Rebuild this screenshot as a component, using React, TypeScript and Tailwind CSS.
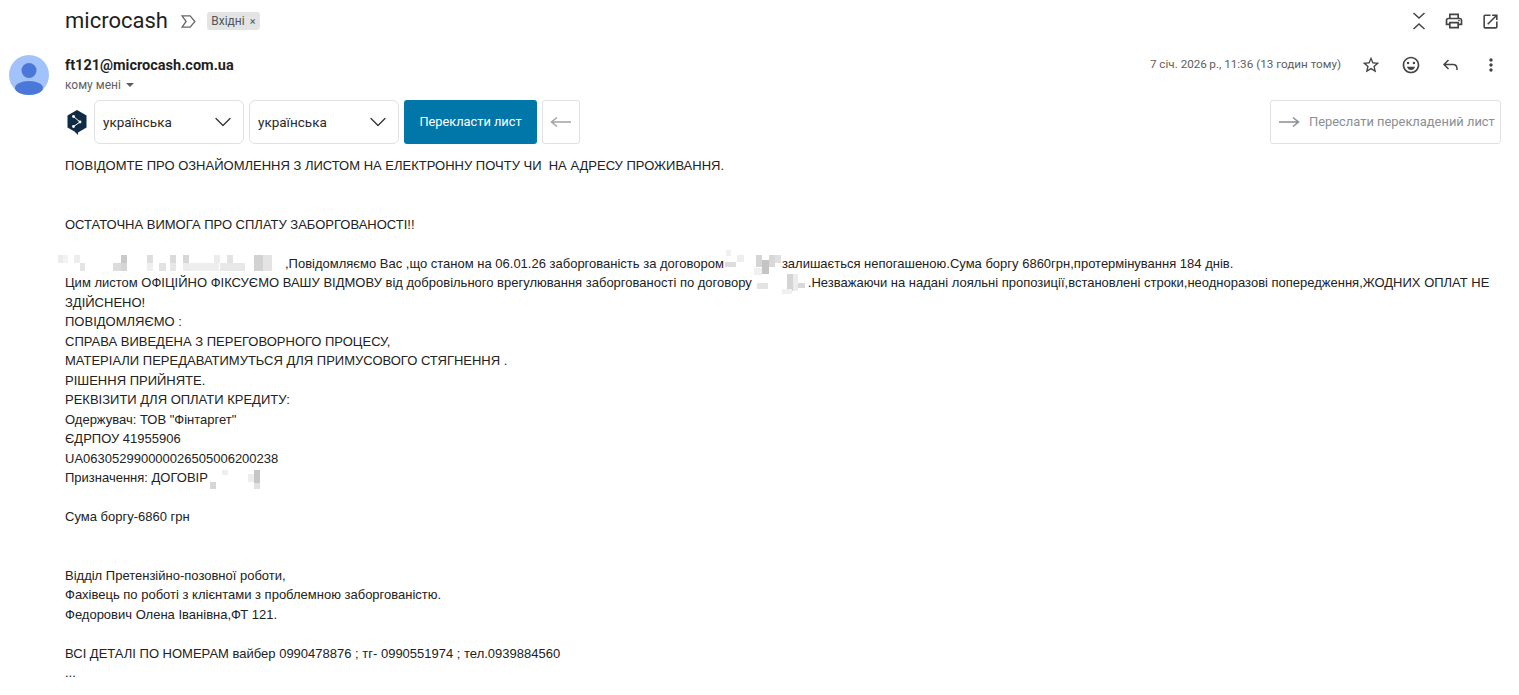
import { MdOutlinePrint, MdOpenInNew, MdStarBorder, MdOutlineEmojiEmotions, MdMoreVert } from 'react-icons/md';
import { ChevronDown } from 'lucide-react';

type Cell = [number, number, number, number, string];

// redacted bits of the letter, cells are x, y, w, h, colour
const nameCells: Cell[] = [
  [1, 1, 5, 8, '#ececec'], [6, 1, 5, 8, '#f3f3f3'], [17, 1, 6, 8, '#ededed'], [23, 9, 5, 8, '#e4e4e4'],
  [56, 9, 8, 8, '#dcdcdc'], [64, 1, 6, 8, '#c9c9c9'], [64, 9, 6, 8, '#d5d5d5'], [90, 1, 6, 8, '#dedede'],
  [90, 9, 6, 8, '#eeeeee'], [102, 9, 7, 8, '#e2e2e2'], [113, 1, 6, 8, '#dadada'], [113, 9, 6, 8, '#e6e6e6'],
  [126, 1, 6, 8, '#d7d7d7'], [126, 9, 6, 8, '#ececec'], [132, 9, 30, 8, '#eeeeee'], [157, 1, 6, 8, '#ececec'],
  [163, 9, 25, 8, '#e8e8e8'], [170, 1, 6, 8, '#e3e3e3'], [197, 1, 9, 16, '#d2d2d2'], [206, 1, 9, 16, '#e4e4e4'],
];
const contractCells: Cell[] = [
  [1, 12, 11, 5, '#dddddd'], [2, 0, 5, 6, '#f0f0f0'], [13, 5, 7, 7, '#eeeeee'], [32, 5, 6, 12, '#d5d5d5'],
  [38, 10, 7, 14, '#c4c4c4'], [45, 5, 6, 12, '#d8d8d8'], [51, 5, 6, 8, '#e0e0e0'], [30, 18, 8, 7, '#f0f0f0'],
];
const contractCells2: Cell[] = [
  [5, 12, 11, 6, '#e3e3e3'], [35, 3, 6, 17, '#d4d4d4'], [41, 3, 5, 17, '#ececec'], [46, 12, 7, 5, '#d8d8d8'],
  [30, 18, 10, 5, '#f1f1f1'],
];
const contractCells3: Cell[] = [
  [2, 13, 6, 7, '#d6d6d6'], [14, 1, 6, 5, '#efefef'], [40, 5, 6, 8, '#ededed'], [46, 1, 6, 13, '#c6c6c6'],
  [46, 14, 6, 6, '#e1e1e1'],
];

function Mosaic({ w, h, cells, className }: { w: number; h: number; cells: Cell[]; className?: string }) {
  return (
    <svg width={w} height={h} viewBox={`0 0 ${w} ${h}`} className={`inline-block align-middle ${className ?? ''}`}>
      {cells.map((c, i) => (
        <rect key={i} x={c[0]} y={c[1]} width={c[2]} height={c[3]} fill={c[4]} />
      ))}
    </svg>
  );
}

function LangSelect() {
  return (
    <div className="w-[150px] h-[44px] rounded-md border border-[#dfe1e5] bg-white flex items-center justify-between pl-2 pr-[6px] text-[13.500px] text-[#2a2a2a]">
      <span>українська</span>
      <ChevronDown size={28} strokeWidth={1.1} className="text-[#333]" />
    </div>
  );
}

function LongArrow({ left, className }: { left?: boolean; className?: string }) {
  return (
    <svg width="22" height="12" viewBox="0 0 22 12" fill="none" stroke="currentColor" strokeWidth="1.5" className={className}>
      {left ? <path d="M21 6H2M7 1.5 1.5 6 7 10.5" /> : <path d="M1 6h19M15 1.5 20.5 6 15 10.5" />}
    </svg>
  );
}

export default function App() {
  return (
    <div className="h-[695px] overflow-hidden bg-white text-[#222] font-['Roboto',sans-serif]">
      {/* Тема листа */}
      <div className="h-[42px] flex items-center pl-[65px] pr-[19px]">
        <h1 className="text-[22px] leading-none text-[#1f1f1f]">microcash</h1>
        <svg width="15" height="13" viewBox="0 0 14 12" fill="none" stroke="#666" strokeWidth="1.2" className="ml-[13px]">
          <path d="M1 .8h7.5L13 6l-4.5 5.2H1L4.8 6z" />
        </svg>
        <div className="ml-[11px] h-[18px] w-[53px] justify-center rounded-[3px] bg-[#e3e5e4] flex items-center gap-[5px] text-[12px] text-[#555]">
          Вхідні <span className="text-[11px] leading-none">×</span>
        </div>
        <div className="ml-auto flex items-center gap-[17px] text-[#444]">
          <svg width="16" height="20" viewBox="0 0 16 20" fill="none" stroke="#444" strokeWidth="1.5">
            <path d="M2.5 2 8 7l5.500-5M2.500 18 8 13l5.500 5" />
          </svg>
          <MdOutlinePrint size={20} />
          <MdOpenInNew size={19} />
        </div>
      </div>

      {/* Відправник */}
      <div className="flex pl-[9px] pr-[18px] mt-[13px]">
        <svg width="40" height="40" viewBox="0 0 40 40" className="shrink-0">
          <circle cx="20" cy="20" r="20" fill="#a1c2fa" />
          <circle cx="20" cy="15.500" r="7.500" fill="#4a78d8" />
          <ellipse cx="20" cy="33" rx="14" ry="7" fill="#4a78d8" />
        </svg>
        <div className="ml-[16px]">
          <div className="pt-[1px] text-[14.500px] leading-[20px] font-bold text-[#1f1f1f]">ft121@microcash.com.ua</div>
          <div className="flex items-center text-[12px] leading-[18px] text-[#5e5e5e]">
            кому мені
            <span className="ml-[5px] w-0 h-0 border-x-[4px] border-x-transparent border-t-[4px] border-t-[#5e5e5e]" />
          </div>
        </div>
        <div className="ml-auto flex h-[20px] items-center text-[#444]">
          <span className="text-[11.700px] text-[#5e5e5e] mr-[20px]">7 січ. 2026{'\u2009'}р., 11:36 (13 годин тому)</span>
          <MdStarBorder size={20} />
          <MdOutlineEmojiEmotions size={20} className="ml-[20px]" />
          <svg width="20" height="20" viewBox="0 0 20 20" fill="none" stroke="#444" strokeWidth="1.5" className="ml-[20px]">
            <path d="M7.500 5 3 9.500 7.500 14M3 9.500h9c2.500 0 4 1.500 4 4.500v1" />
          </svg>
          <MdMoreVert size={20} className="ml-[20px]" />
        </div>
      </div>

      {/* Панель перекладу */}
      <div className="flex items-center mt-[5px] pl-[67px] pr-[18px]">
        <svg width="20" height="25" viewBox="0 0 20 25" className="mr-[7px]">
          <path d="M10 0 19.500 5.500v12L11 22.500 11 25 7.500 21.500.5 17.500v-12z" fill="#0f2b46" />
          <path d="M6.500 6.500 13 12l-6.500 4.500" fill="none" stroke="#fff" strokeWidth="1" />
          <circle cx="6.500" cy="6.500" r="1.400" fill="#fff" />
          <circle cx="13" cy="12" r="1.400" fill="#fff" />
          <circle cx="6.500" cy="16.500" r="1.400" fill="#fff" />
        </svg>
        <LangSelect />
        <div className="w-[5px]" />
        <LangSelect />
        <button className="ml-[5px] w-[133px] h-[44px] rounded-[3px] bg-[#0077a8] text-white text-[12.800px]">Перекласти лист</button>
        <button className="ml-[5px] w-[38px] h-[44px] rounded-[3px] border border-[#dfe1e5] flex items-center justify-center text-[#a0a4a8]">
          <LongArrow left />
        </button>
        <button className="ml-auto w-[231px] h-[44px] rounded-[3px] border border-[#dfe1e5] flex items-center pl-[7px] text-[12.900px] text-[#8a8f94]">
          <LongArrow className="mr-[9px]" />
          Переслати перекладений лист
        </button>
      </div>

      {/* Текст листа */}
      <div className="mt-[12px] pl-[65px] pr-[18px] font-['Liberation_Sans',Arial,sans-serif] text-[13px] leading-[19.5px] text-[#222]">
        <p>ПОВІДОМТЕ ПРО ОЗНАЙОМЛЕННЯ З ЛИСТОМ НА ЕЛЕКТРОННУ ПОЧТУ ЧИ&nbsp; НА АДРЕСУ ПРОЖИВАННЯ.</p>
        <br />
        <br />
        <p>ОСТАТОЧНА ВИМОГА ПРО СПЛАТУ ЗАБОРГОВАНОСТІ!!</p>
        <br />
        <p>
          <Mosaic w={220} h={20} cells={nameCells} className="-ml-[8px] mr-[8px] -my-[8px]" />
          ,Повідомляємо Вас ,що станом на 06.01.26 заборгованість за договором
          <Mosaic w={58} h={28} cells={contractCells} className="-my-[8px]" />
          залишається непогашеною.Сума боргу 6860грн,протермінування 184 днів.
        </p>
        <p>
          Цим листом ОФІЦІЙНО ФІКСУЄМО ВАШУ ВІДМОВУ від добровільного врегулювання заборгованості по договору
          <Mosaic w={56} h={26} cells={contractCells2} className="-my-[8px]" />
          .Незважаючи на надані лояльні пропозиції,встановлені строки,неодноразові попередження,ЖОДНИХ ОПЛАТ НЕ ЗДІЙСНЕНО!
        </p>
        <p>ПОВІДОМЛЯЄМО :</p>
        <p>СПРАВА ВИВЕДЕНА З ПЕРЕГОВОРНОГО ПРОЦЕСУ,</p>
        <p>МАТЕРІАЛИ ПЕРЕДАВАТИМУТЬСЯ ДЛЯ ПРИМУСОВОГО СТЯГНЕННЯ .</p>
        <p>РІШЕННЯ ПРИЙНЯТЕ.</p>
        <p>РЕКВІЗИТИ ДЛЯ ОПЛАТИ КРЕДИТУ:</p>
        <p>Одержувач: ТОВ "Фінтаргет"</p>
        <p>ЄДРПОУ 41955906</p>
        <p>UA063052990000026505006200238</p>
        <p>
          Призначення: ДОГОВІР
          <Mosaic w={54} h={20} cells={contractCells3} className="-my-[8px]" />
        </p>
        <br />
        <p>Сума боргу-6860 грн</p>
        <br />
        <br />
        <p>Відділ Претензійно-позовної роботи,</p>
        <p>Фахівець по роботі з клієнтами з проблемною заборгованістю.</p>
        <p>Федорович Олена Іванівна,ФТ 121.</p>
        <br />
        <p>ВСІ ДЕТАЛІ ПО НОМЕРАМ вайбер 0990478876 ; тг- 0990551974 ; тел.0939884560</p>
        <p>...</p>
      </div>
    </div>
  );
}
